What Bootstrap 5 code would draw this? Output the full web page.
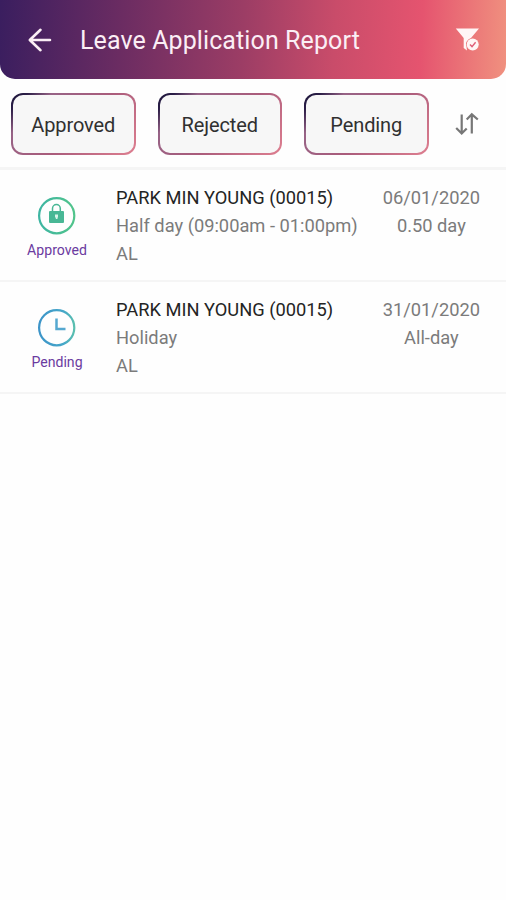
<!DOCTYPE html>
<html lang="en">
<head>
<meta charset="utf-8">
<meta name="viewport" content="width=device-width, initial-scale=1">
<title>Leave Application Report</title>
<link href="https://cdn.jsdelivr.net/npm/bootstrap@5.3.0/dist/css/bootstrap.min.css" rel="stylesheet">
<style>
body{font-family:Roboto,"Liberation Sans",sans-serif;background:#fefefe;min-height:900px;overflow:hidden}
.app-bar{height:79px;padding:2px 25px 0 25px;border-radius:0 0 15px 15px;background:linear-gradient(93deg,#3a1e5f 0%,#6b2c62 24%,#9c3d65 48%,#c94c6a 66%,#e5546f 83%,#f0917f 100%)}
.app-title{font-size:25px;line-height:30px;letter-spacing:.1px;margin-left:25px;color:#fbeef5}
.filters{height:91px;padding:14px 26px 0 11px;border-bottom:3px solid #f5f5f5}
.chip{width:124.500px;height:62px;margin-right:22px;border:2px solid transparent;border-radius:12px;font-size:20px;line-height:60px;letter-spacing:-.1px;color:#303030;background:linear-gradient(#f7f7f7,#f7f7f7) padding-box,linear-gradient(135deg,#191338 0%,#2b1e47 9%,#976386 22%,#aa5c7b 55%,#df7f90 100%) border-box}
.chip:hover{color:#303030}
.entry{height:112px;border-bottom:2px solid #f5f5f5;padding:14px 26px 0 0;font-size:18.3px;line-height:28.1px;color:#7b7b7b}
.entry-status{width:116px;padding:13px 2px 0 0;font-size:14.1px;line-height:18px;color:#6b3ba0}
.entry-status svg{margin-bottom:6px}
.entry-name{color:#242424}
</style>
<script src="https://cdn.jsdelivr.net/npm/bootstrap@5.3.0/dist/js/bootstrap.bundle.min.js"></script>
</head>
<body>
<header class="app-bar d-flex align-items-center">
  <svg width="30" height="30" viewBox="0 0 30 30" fill="none" stroke="#fbeef5" stroke-width="2.6" stroke-linecap="round" stroke-linejoin="round"><path d="M25 14H5M15.500 3.800L4.800 14L15.500 24.200"/></svg>
  <h1 class="app-title mb-0 fw-normal">Leave Application Report</h1>
  <svg class="ms-auto" width="26" height="26" viewBox="0 0 26 26"><path d="M.8 .5H24L16 10C12 11.500 10.200 15 11.400 18L12 22.500L8.700 20V10Z" fill="#fff5f5"/><circle cx="17.700" cy="16.500" r="6" fill="#fff5f5"/><path d="M15 16.600L17 18.600L20.600 14.300" fill="none" stroke="#df5d76" stroke-width="1.400"/></svg>
</header>
<nav class="filters d-flex align-items-start">
  <button class="btn chip p-0">Approved</button>
  <button class="btn chip p-0">Rejected</button>
  <button class="btn chip p-0 me-0">Pending</button>
  <svg class="ms-auto align-self-start mt-3" width="26" height="28" viewBox="0 0 26 28" fill="none" stroke="#777" stroke-width="2.200"><path d="M7.700 5.500V24.500M2.200 19L7.700 24.500L12.700 19.500M17.800 24.500V5M12.700 10.500L17.800 5.300L23.800 10.500"/></svg>
</nav>
<main>
  <section class="entry d-flex">
    <div class="entry-status text-center">
      <svg class="d-block mx-auto" width="38" height="38" viewBox="0 0 38 38"><defs><linearGradient id="green"><stop stop-color="#3db5a2"/><stop offset="1" stop-color="#51c48b"/></linearGradient></defs><circle cx="18.700" cy="18.700" r="17.600" fill="none" stroke="url(#green)" stroke-width="2.200"/><path d="M14.500 14.500V11.500a3.900 3.900 0 0 1 7.800 0V14.500" fill="none" stroke="#48b795" stroke-width="1.500"/><rect x="11" y="14" width="15" height="12" rx="1" fill="#48b795"/><path d="M17 17.500H20V19.500L19.400 22H18L17 19.500Z" fill="#d9f3e9"/></svg>
      Approved
    </div>
    <div><div class="entry-name">PARK MIN YOUNG (00015)</div><div>Half day (09:00am - 01:00pm)</div><div>AL</div></div>
    <div class="ms-auto text-center"><div>06/01/2020</div><div>0.50 day</div></div>
  </section>
  <section class="entry d-flex">
    <div class="entry-status text-center">
      <svg class="d-block mx-auto" width="38" height="38" viewBox="0 0 38 38"><defs><linearGradient id="blue"><stop stop-color="#3c94c8"/><stop offset=".7" stop-color="#45a7c9"/><stop offset="1" stop-color="#5abfae"/></linearGradient></defs><circle cx="18.700" cy="18.700" r="17.600" fill="none" stroke="url(#blue)" stroke-width="2.200"/><path d="M18.500 9.500V20H27.500" fill="none" stroke="#55a8d0" stroke-width="2.500"/></svg>
      Pending
    </div>
    <div><div class="entry-name">PARK MIN YOUNG (00015)</div><div>Holiday</div><div>AL</div></div>
    <div class="ms-auto text-center"><div>31/01/2020</div><div>All-day</div></div>
  </section>
</main>
</body>
</html>
